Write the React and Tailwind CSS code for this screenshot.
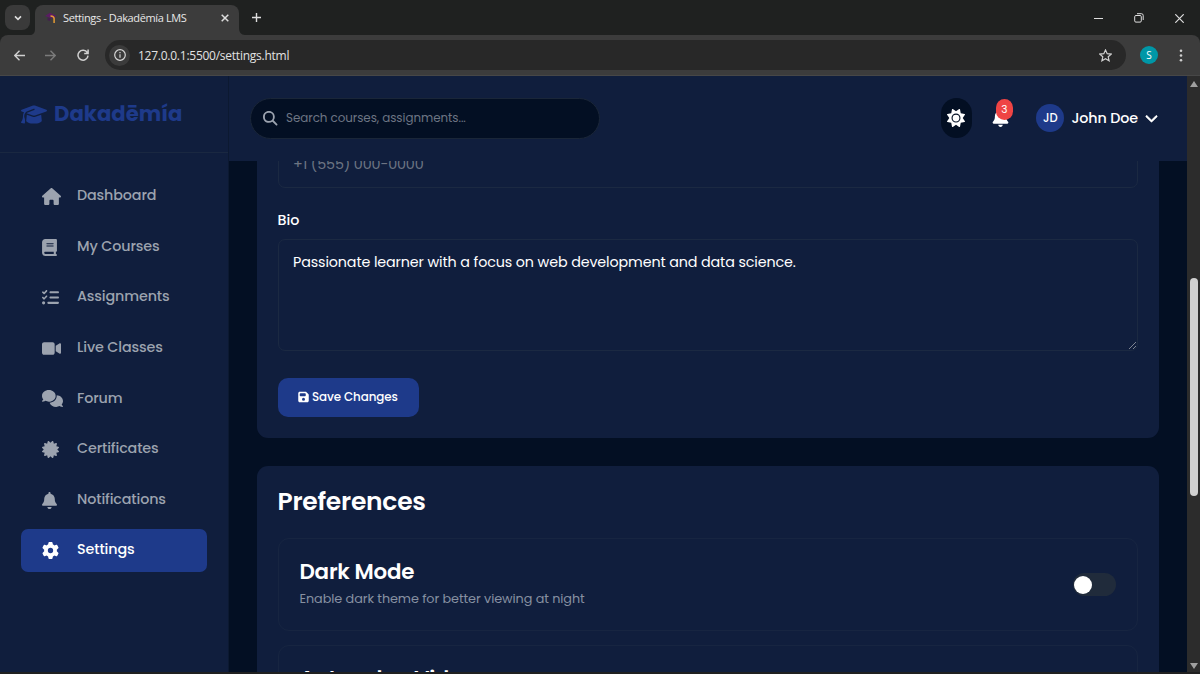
import React from "react";
import {
  FaBell, FaBook, FaCertificate, FaChevronDown, FaComments, FaFloppyDisk, FaGear,
  FaGraduationCap, FaHouse, FaListCheck, FaMagnifyingGlass, FaSun, FaVideo,
} from "react-icons/fa6";

const navItems = [
  { label: "Dashboard", icon: FaHouse, width: "w-[19px]" },
  { label: "My Courses", icon: FaBook, width: "w-[15px]" },
  { label: "Assignments", icon: FaListCheck, width: "w-[17px]" },
  { label: "Live Classes", icon: FaVideo, width: "w-[19px]" },
  { label: "Forum", icon: FaComments, width: "w-[21px]" },
  { label: "Certificates", icon: FaCertificate, width: "w-[17px]" },
  { label: "Notifications", icon: FaBell, width: "w-[15px]" },
  { label: "Settings", icon: FaGear, width: "w-[17px]", active: true },
];

function TabStrip() {
  return (
    <div className="flex h-[35px] shrink-0 items-start bg-[#1f2120] text-[#dedede]">
      <div className="ml-[5px] mt-[5px] flex h-[25px] w-[25px] items-center justify-center rounded-[8px] bg-[#3a3a3a]">
        <svg className="h-2 w-2" viewBox="0 0 8 8" fill="none" stroke="currentColor" strokeWidth="1.6">
          <path d="M1 2.4 4 5.4 7 2.4" />
        </svg>
      </div>
      <svg className="mt-[29px] h-[6px] w-[5px]" viewBox="0 0 5 6"><path d="M5 0v6H0C3.500 6 5 3.500 5 0z" fill="#3c3c3c" /></svg>
      <div className="mt-[5px] flex h-[30px] w-[204px] items-center rounded-t-[8px] bg-[#3c3c3c] pb-[4px] pl-[10px] pr-[10px]">
        <svg className="h-3 w-3 shrink-0" viewBox="0 0 12 12">
          <path d="M0 4 5 0.8 11.5 4 7 6.5z" fill="#5b1c63" />
          <path d="M2.5 5.5v2.8L5 9 6 6.5z" fill="#43204d" />
          <path d="M5.500 4c2 .1 3.600 .8 3.600 2.600V11" fill="none" stroke="#e39a34" strokeWidth="1.5" />
        </svg>
        <span className="ml-[6px] whitespace-nowrap text-[11px] leading-4 tracking-[-0.38px] text-[#e8e8e8]">Settings - Dakadēmía LMS</span>
        <svg className="ml-auto h-2 w-2" viewBox="0 0 8 8" stroke="currentColor" strokeWidth="1.5"><path d="m.7.7 6.6 6.6M7.3.7.7 7.3" /></svg>
      </div>
      <svg className="mt-[28px] h-[7px] w-[6px]" viewBox="0 0 6 7"><path d="M0 0v7h6C2 7 0 4 0 0z" fill="#3c3c3c" /></svg>
      <svg className="ml-[7px] mt-[13px] h-[9px] w-[9px]" viewBox="0 0 9 9" stroke="currentColor" strokeWidth="1.4"><path d="M4.5 0v9M0 4.5h9" /></svg>
      <div className="ml-auto mr-[16px] mt-[13px] flex items-center gap-[31px]">
        <svg className="h-[9px] w-[9px]" viewBox="0 0 9 9" stroke="currentColor"><path d="M0 4.5h9" /></svg>
        <svg className="h-[10px] w-[10px]" viewBox="0 0 10 10" fill="none" stroke="currentColor">
          <rect x=".7" y="2.5" width="6.6" height="6.6" rx="1.2" /><path d="M3 .7h4.4a1.8 1.8 0 0 1 1.8 1.8V7" />
        </svg>
        <svg className="h-[9px] w-[9px]" viewBox="0 0 9 9" stroke="currentColor" strokeWidth="1.2"><path d="m.3.3 8.4 8.4M8.7.3.3 8.7" /></svg>
      </div>
    </div>
  );
}

function Toolbar() {
  return (
    <div className="flex shrink-0 bg-[#1f2120]">
      <div className="flex h-[41px] w-full items-center rounded-t-[8px] border-b border-[#474747] bg-[#3c3c3c] pr-[17px]">
        <svg className="ml-[14px] h-[11px] w-[11px] text-[#d0d0d0]" viewBox="0 0 11 11" fill="none" stroke="currentColor" strokeWidth="1.4"><path d="M11 5.5H1M5.5.8.8 5.5l4.7 4.7" /></svg>
        <svg className="ml-[20px] h-[11px] w-[11px] text-[#7b7b7b]" viewBox="0 0 11 11" fill="none" stroke="currentColor" strokeWidth="1.4"><path d="M0 5.5h10M5.5.8l4.7 4.7-4.7 4.7" /></svg>
        <svg className="ml-[21px] h-[12px] w-[12px] text-[#d0d0d0]" viewBox="0 0 12 12" fill="none" stroke="currentColor" strokeWidth="1.5"><path d="M10.3 3.6A5 5 0 1 0 11 6.6M11.1.6v3.900H7.200" /></svg>
        <div className="ml-[16px] flex h-[30px] flex-1 items-center rounded-full bg-[#282828] pl-[4px] pr-[14px]">
          <div className="flex h-[21px] w-[21px] items-center justify-center rounded-full bg-[#3b3b3b]">
            <svg className="h-3 w-3 text-[#d6d6d6]" viewBox="0 0 12 12" fill="none" stroke="currentColor" strokeWidth="1.2"><circle cx="6" cy="6" r="5.3" /><path d="M6 5.3v3.4M6 3.1v1.2" /></svg>
          </div>
          <span className="ml-[8px] pt-px text-[12px] leading-4 tracking-[-0.25px] text-[#e2e2e2]">127.0.0.1:5500/settings.html</span>
          <svg className="ml-auto h-[13px] w-[13px] text-[#d0d0d0]" viewBox="0 0 13 13" fill="none" stroke="currentColor" strokeWidth="1.2"><path d="m6.5 1 1.7 3.7 4 .4-3 2.7.9 4-3.6-2.1-3.6 2.1.9-4-3-2.7 4-.4z" /></svg>
        </div>
        <div className="ml-[14px] flex h-[18px] w-[18px] items-center justify-center rounded-full bg-[#0097a7] text-[10px] text-white">S</div>
        <svg className="ml-[21px] h-[13px] w-[4px]" viewBox="0 0 4 13" fill="#d0d0d0"><circle cx="2" cy="1.7" r="1.3" /><circle cx="2" cy="6.5" r="1.3" /><circle cx="2" cy="11.3" r="1.3" /></svg>
      </div>
    </div>
  );
}

function Sidebar() {
  return (
    <aside className="flex w-[229px] shrink-0 flex-col border-r border-[#0c1931] bg-[#101e3d]">
      <div className="flex h-[77px] items-center border-b border-[#1a2841] pl-[21px] text-[#1e3a8a]">
        <FaGraduationCap className="h-[21px] w-[26px]" />
        <span className="ml-[7px] text-[21.2px] font-bold leading-8">Dakadēmía</span>
      </div>
      <nav className="flex flex-col gap-[7.6px] px-[21px] pt-[21.5px]">
        {navItems.map(({ label, icon: Icon, active, width }) => (
          <a key={label} className={`flex h-[43px] items-center rounded-[7px] pl-[21px] text-[14.3px] ${active ? "bg-[#1e3a8a] text-white" : "text-[#9ca3af]"}`}>
            <span className="w-[35px] pt-px"><Icon className={`h-[17px] ${width}`} /></span>
            <span className="font-medium tracking-[-0.12px]">{label}</span>
          </a>
        ))}
      </nav>
    </aside>
  );
}

function Header() {
  return (
    <header className="flex h-[84.5px] shrink-0 items-center bg-[#101e3d] pl-[21px] pr-[29px]">
      <div className="flex h-[41px] w-[350px] items-center rounded-full border border-[#1a2638] bg-[#030f23] pl-[12px]">
        <FaMagnifyingGlass className="h-[14.5px] w-[14.5px] text-[#9ca3af]" />
        <span className="ml-[8.5px] pt-[1.5px] text-[11.9px] tracking-[-0.05px] text-[#6d7583]">Search courses, assignments...</span>
      </div>
      <div className="ml-auto flex h-[40px] w-[31px] items-center justify-center rounded-full bg-[#030f23] text-white">
        <FaSun className="h-[18px] w-[18px]" />
      </div>
      <div className="relative ml-[20px] text-white">
        <FaBell className="h-[18px] w-[17px]" />
        <span className="absolute -top-[10px] left-[4px] flex h-[21px] w-[17px] items-center justify-center rounded-full bg-[#ef4444] text-[10.5px]">3</span>
      </div>
      <div className="ml-[27.5px] flex h-[28px] w-[28px] items-center justify-center rounded-full bg-[#1e3a8a] text-[11.5px] font-medium text-white">JD</div>
      <span className="ml-[7px] text-[14.3px] font-medium tracking-[-0.12px] text-white">John Doe</span>
      <FaChevronDown className="ml-[7px] h-[14px] w-[13px] stroke-white stroke-[24] text-white" />
    </header>
  );
}

function Preference({ title, description }) {
  return (
    <div className="flex h-[93px] shrink-0 items-center justify-between rounded-[11px] border border-[#172541] px-[21px]">
      <div className="-mt-[4px]">
        <h3 className="text-[21.4px] font-semibold leading-[32px] tracking-[-0.22px] text-white">{title}</h3>
        <p className="text-[12.8px] leading-[21px] tracking-[-0.07px] text-[#8690a1]">{description}</p>
      </div>
      <div className="flex h-[23px] w-[43px] items-center rounded-full bg-[#202b3b] pl-px">
        <div className="h-[18px] w-[18px] rounded-full bg-white" />
      </div>
    </div>
  );
}

function Scrollbar() {
  return (
    <div className="flex w-[13px] shrink-0 flex-col items-center bg-[#2c2c2c] pt-[5px] pb-[3px]">
      <svg className="h-[6px] w-[8px]" viewBox="0 0 8 6"><path d="M4 0 8 6H0z" fill="#9f9f9f" /></svg>
      <div className="mt-[191px] h-[218px] w-[8px] rounded-full bg-[#d0d0d0]" />
      <svg className="mt-auto h-[6px] w-[8px]" viewBox="0 0 8 6"><path d="M0 0h8L4 6z" fill="#9f9f9f" /></svg>
    </div>
  );
}

export default function App() {
  return (
    <div className="flex h-[674px] w-[1200px] flex-col overflow-hidden bg-[#202020] font-['Open_Sans','Noto_Sans',sans-serif]">
      <TabStrip />
      <Toolbar />
      <div className="flex h-[596px] shrink-0 overflow-hidden font-['Poppins','Inter',sans-serif]">
        <Sidebar />
        <div className="flex min-w-0 flex-1 flex-col overflow-hidden bg-[#030f23]">
          <Header />
          <main className="flex min-h-0 flex-1 flex-col overflow-hidden pl-[27.5px] pr-[28px]">
            <section className="-mt-10 flex h-[317px] shrink-0 flex-col rounded-[11px] bg-[#101e3d] pl-[21px] pr-[21.5px] pt-[21px]">
              <div className="flex h-[46px] shrink-0 items-center rounded-[7px] border border-[#1b2942] pl-[14.5px] pt-px text-[14.3px] tracking-[-0.12px] text-[#6d7583]">+1 (555) 000-0000</div>
              <label className="mt-[21px] text-[14.3px] font-medium leading-[22px] text-white">Bio</label>
              <div className="mt-[8px] flex h-[112.5px] shrink-0 justify-between rounded-[7px] border border-[#1b2942] pl-[14.5px] pt-[11px]">
                <span className="text-[14.3px] leading-[22px] tracking-[-0.12px] text-white">Passionate learner with a focus on web development and data science.</span>
                <svg className="mb-px mr-px h-[7px] w-[7px] self-end" viewBox="0 0 7 7" stroke="#8b909b" strokeWidth=".9"><path d="M0 7 7 0M4 7l3-3" /></svg>
              </div>
              <button className="mt-[26.500px] flex h-[39px] w-[141.5px] items-center rounded-[10px] bg-[#1e3a8a] pl-[20px] text-[11.9px] font-medium text-white">
                <FaFloppyDisk className="h-[12px] w-[11px]" />
                <span className="ml-[3.5px] whitespace-nowrap pt-px tracking-[-0.1px]">Save Changes</span>
              </button>
            </section>
            <section className="mt-[28px] flex h-[400px] shrink-0 flex-col rounded-[11px] bg-[#101e3d] pl-[21px] pr-[21.5px] pt-[16px]">
              <h2 className="mb-[16.5px] text-[25px] font-semibold leading-[40px] tracking-[-0.25px] text-white">Preferences</h2>
              <div className="flex flex-col gap-[14px]">
                <Preference title="Dark Mode" description="Enable dark theme for better viewing at night" />
                <Preference title="Auto-play Videos" description="Automatically play the next video" />
              </div>
            </section>
          </main>
        </div>
        <Scrollbar />
      </div>
    </div>
  );
}
